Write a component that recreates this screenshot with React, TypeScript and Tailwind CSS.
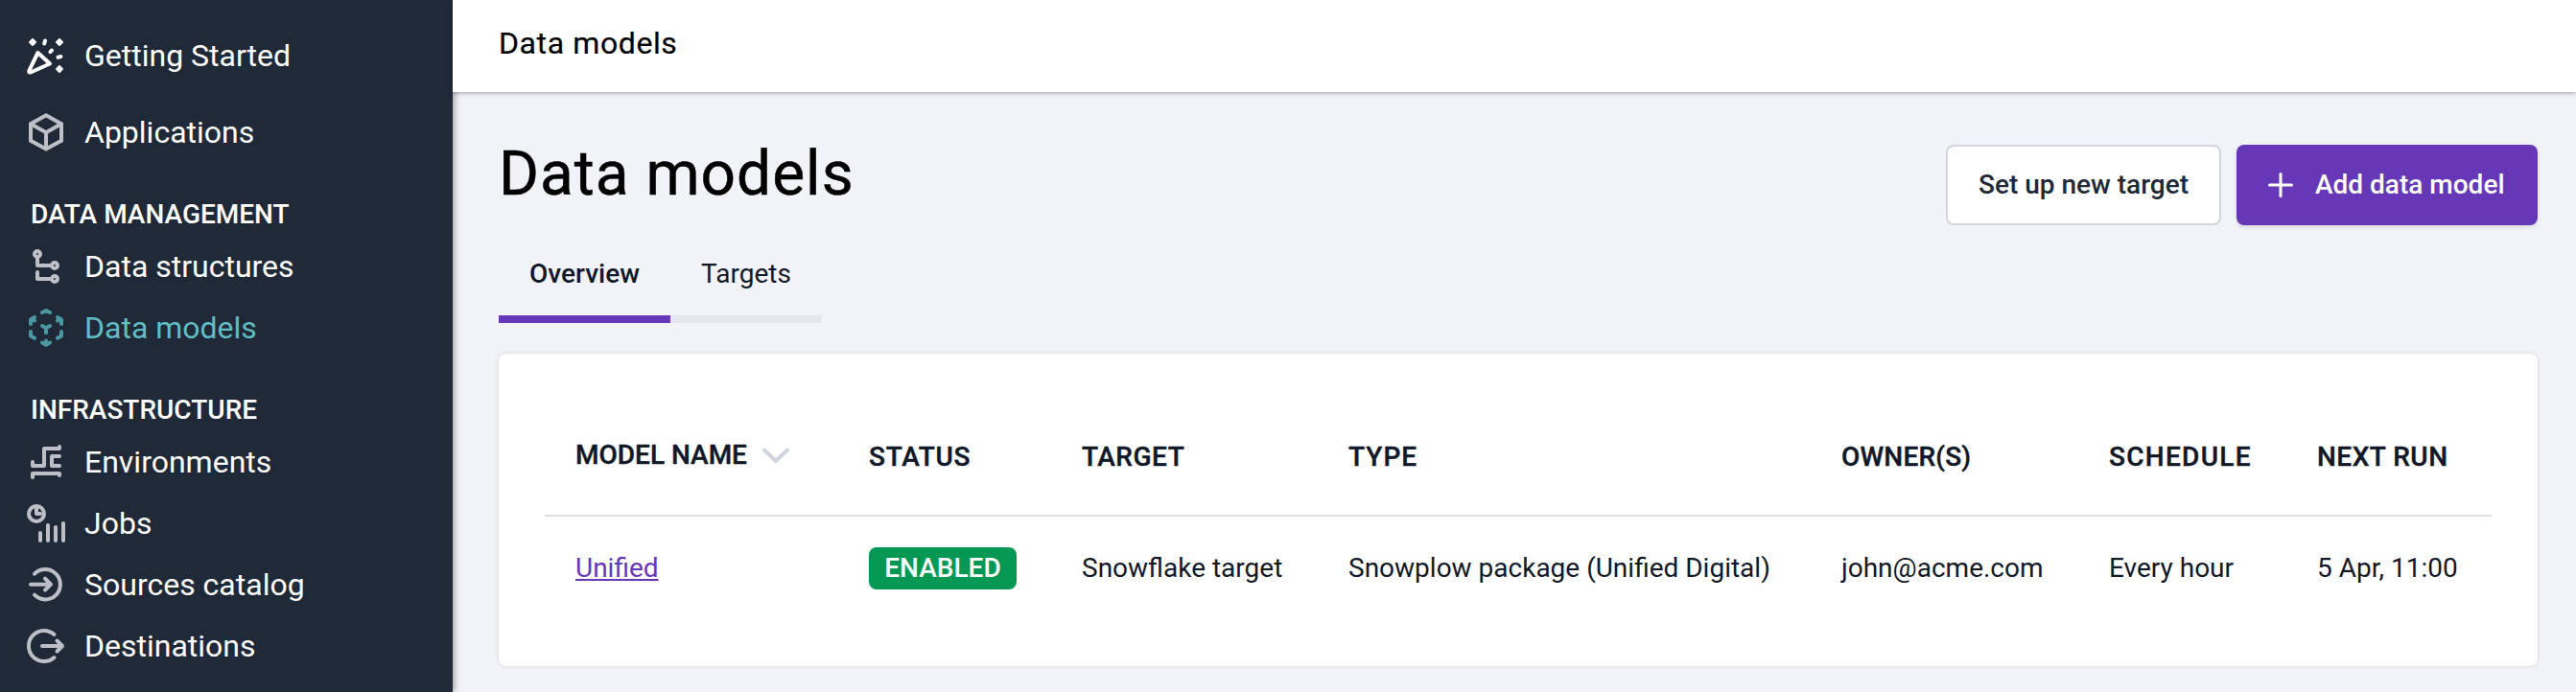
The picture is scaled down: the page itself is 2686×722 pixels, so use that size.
import React from "react";

const columns = "grid grid-cols-[306px_222px_278px_514px_279px_217px_214px]";

function Icon({ children }: { children: React.ReactNode }) {
  return (
    <svg className="h-12 w-12 shrink-0" viewBox="0 0 48 48" fill="none" stroke="currentColor" strokeWidth="4" strokeLinecap="round" strokeLinejoin="round">
      {children}
    </svg>
  );
}

const PartyIcon = () => (
  <Icon>
    <path d="M15.500 21 L28 32.500 L8.500 41.300 Q5.200 42.500 6.500 39.300 Z" />
    <path d="M10 7l3 3-3 3-3-3z M38 7l3 3-3 3-3-3z M38 35l3 3-3 3-3-3z" fill="currentColor" strokeWidth="2" />
    <path d="M23 8.500l-.8 3M30 18.500l-1.600 1.600M39.500 25l-3 .7" />
  </Icon>
);

const CubeIcon = () => (
  <Icon>
    <path d="M24 6.300 L40 15.200 V32.800 L24 41.500 L8 32.800 V15.200 Z M8.500 15.500 L24 24.300 L39.500 15.500 M24 24.300 V41" strokeLinejoin="miter" strokeLinecap="butt" />
  </Icon>
);

const StructuresIcon = () => (
  <Icon>
    <circle cx="15" cy="11" r="3" />
    <circle cx="33" cy="23" r="3" />
    <circle cx="33" cy="37" r="3" />
    <path d="M15 14v9h15M15 30v7h15" />
  </Icon>
);

const ModelsIcon = () => (
  <Icon>
    <path d="M20 8l4-2 4 2M8 20v-4.500l4-2.500M40 20v-4.500l-4-2.500M12 16.500l-2-1M36 16.500l2-1M8 28v4.500l4 2.300M40 28v4.500l-4 2.300M20 22l4 2.300 4-2.300M24 24.300v5M20 39.500l4 2.200 4-2.200M24 37.500v3" />
  </Icon>
);

const EnvironmentsIcon = () => (
  <Icon>
    <path d="M10 24v4h12V10h16V8M38 18h-8v10h8M10 40v-4h28v2" />
  </Icon>
);

const JobsIcon = () => (
  <Icon>
    <circle cx="14" cy="14" r="8" />
    <path d="M14 8v6h4M18 34v8M26 26v16M34 28v14M42 24v18" />
  </Icon>
);

const SourcesIcon = () => (
  <Icon>
    <path d="M12 12.700a15.700 15.700 0 1 1 0 22M8 23.700h21M23 17.700l6 6-6 6" />
  </Icon>
);

const DestinationsIcon = () => (
  <Icon>
    <path d="M32.500 12a16 16 0 1 0 0 24M20 24h21M35.500 18.500l5.500 5.500-5.500 5.500" />
  </Icon>
);

type NavItemProps = { icon: React.ReactNode; label: string; active?: boolean; bright?: boolean; tall?: boolean };

function NavItem({ icon, label, active, bright, tall }: NavItemProps) {
  return (
    <a className={`flex items-center pl-6 ${tall ? "h-20" : "h-16"} ${active ? "text-[#61bdc4]" : "text-white"}`}>
      <span className={active ? "text-[#4b97a2]" : bright ? "text-white" : "text-[#bcbfc5]"}>{icon}</span>
      <span className="ml-4 text-[32px] leading-10">{label}</span>
    </a>
  );
}

export default function App() {
  return (
    <div className="flex h-[722px] w-full overflow-hidden bg-[#f2f3f8] font-['Roboto',sans-serif] text-[#111827]">
      <nav className="z-10 flex w-[472px] shrink-0 flex-col bg-[#1f2938] pt-[18px] shadow-[2px_0_6px_rgba(0,0,0,0.35)]">
        <NavItem tall bright icon={<PartyIcon />} label="Getting Started" />
        <NavItem tall icon={<CubeIcon />} label="Applications" />
        <h2 className="flex h-[68px] items-end pb-[6px] pl-8 text-[28px] leading-8 font-medium text-white">DATA MANAGEMENT</h2>
        <NavItem icon={<StructuresIcon />} label="Data structures" />
        <NavItem active icon={<ModelsIcon />} label="Data models" />
        <h2 className="flex h-[76px] items-end pb-[6px] pl-8 text-[28px] leading-8 font-medium text-white">INFRASTRUCTURE</h2>
        <NavItem icon={<EnvironmentsIcon />} label="Environments" />
        <NavItem icon={<JobsIcon />} label="Jobs" />
        <NavItem icon={<SourcesIcon />} label="Sources catalog" />
        <NavItem icon={<DestinationsIcon />} label="Destinations" />
      </nav>
      <div className="flex min-w-0 flex-1 flex-col">
        <header className="z-20 flex h-24 shrink-0 items-center bg-white pb-[6px] pl-12 text-[32px] tracking-[0.6px] text-black shadow-[0_2px_4px_rgba(0,0,0,0.25)] [-webkit-text-stroke:0.2px]">
          Data models
        </header>
        <main className="flex flex-col pr-10 pl-12">
          <div className="flex items-start justify-between pt-[55px]">
            <h1 className="-mt-[9px] text-[64px] leading-[80px] tracking-[1px] text-black [-webkit-text-stroke:0.5px]">Data models</h1>
            <div className="flex gap-4">
              <button className="flex h-[84px] w-[287px] items-center justify-center rounded-lg border-2 border-[#d1d5dc] bg-white text-[28px] font-medium text-[#1f2938]">Set up new target</button>
              <button className="flex h-[84px] w-[314px] items-center rounded-lg bg-[#6638b8] pl-[33px] text-[28px] font-medium text-white shadow-[0_2px_4px_rgba(0,0,0,0.1)]">
                <svg className="mr-[23px] h-[26px] w-[26px]" viewBox="0 0 26 26" stroke="currentColor" strokeWidth="3" strokeLinecap="round">
                  <path d="M13 1.500v23M1.500 13h23" />
                </svg>
                Add data model
              </button>
            </div>
          </div>
          <div className="flex text-[28px] leading-8">
            <div className="flex h-[102px] w-[179px] justify-center border-b-8 border-[#6638b8] pt-[35px] font-medium">Overview</div>
            <div className="flex h-[102px] w-[158px] justify-center border-b-8 border-[#e4e6ea] pt-[35px]">Targets</div>
          </div>
          <section className="mt-8 h-[326px] rounded-lg bg-white px-12 shadow-[0_0_4px_rgba(0,0,0,0.14)]">
            <div className={`${columns} h-[170px] items-center border-b-2 border-[#e0e0e0] pt-12 text-[28px] leading-8 font-medium [-webkit-text-stroke:0.4px] *:pl-8`}>
              <div className="-mt-1 flex items-center">
                MODEL NAME
                <svg className="ml-[14px] h-5 w-8" viewBox="0 0 32 20" fill="none" stroke="#cfd4dd" strokeWidth="4" strokeLinecap="round" strokeLinejoin="round">
                  <path d="M4 4.500l12 11.500 12-11.500" />
                </svg>
              </div>
              <div className="tracking-[0.7px]">STATUS</div>
              <div className="tracking-[0.5px]">TARGET</div>
              <div className="tracking-[1px]">TYPE</div>
              <div className="tracking-[0.2px]">OWNER(S)</div>
              <div className="tracking-[1.3px]">SCHEDULE</div>
              <div className="tracking-[0.5px]">NEXT RUN</div>
            </div>
            <div className={`${columns} h-[108px] items-center text-[28px] leading-8 *:pl-8`}>
              <div className="text-[#6638b8]">
                <a className="underline decoration-2 underline-offset-2 [text-decoration-skip-ink:none]">Unified</a>
              </div>
              <div>
                <span className="flex h-11 w-[154px] items-center justify-center rounded-lg bg-[#059855] font-medium text-white">ENABLED</span>
              </div>
              <div>Snowflake target</div>
              <div>Snowplow package (Unified Digital)</div>
              <div>john@acme.com</div>
              <div>Every hour</div>
              <div>5 Apr, 11:00</div>
            </div>
          </section>
        </main>
      </div>
    </div>
  );
}
